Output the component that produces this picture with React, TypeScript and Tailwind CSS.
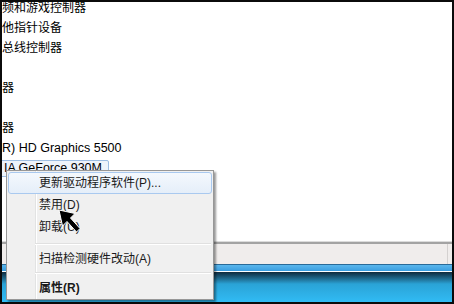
import React from "react";

const cjk = { fontFamily: '"Liberation Sans", "Noto Sans CJK SC", sans-serif' };

function Row({ children }: { children?: React.ReactNode }) {
  return <div className="h-[20px] flex items-center text-[12px] text-black whitespace-nowrap">{children}</div>;
}

function Item({ children, hl, bold }: { children: React.ReactNode; hl?: boolean; bold?: boolean }) {
  return (
    <div
      className={
        "h-[22px] flex items-center pl-[30px] text-[12px] text-[#1a1a1a] rounded-[3px] border " +
        (hl ? "border-[#a9c9ef] bg-gradient-to-b from-[#f4f8fd] to-[#e5eef9]" : "border-transparent") +
        (bold ? " font-bold" : "")
      }
    >
      {children}
    </div>
  );
}

function Sep({ h, top }: { h: string; top: string }) {
  return (
    <div className={h + " flex flex-col pl-[27px] pr-[1px]"}>
      <div className={top} />
      <div className="h-px bg-[#e0e0e0]" />
      <div className="h-px bg-white" />
    </div>
  );
}

export default function App() {
  return (
    <div className="relative w-[454px] h-[304px] bg-[#0b0b0b] p-[2px] overflow-hidden" style={cjk}>
      <div className="w-[450px] h-[300px] flex flex-col">
        <div className="h-[239px] bg-white overflow-hidden">
          <div className="-mt-[4px] flex flex-col">
            <Row>频和游戏控制器</Row>
            <Row>他指针设备</Row>
            <Row>总线控制器</Row>
            <Row />
            <Row>器</Row>
            <Row />
            <Row>器</Row>
            <Row>
              <span className="text-[12.5px]">R) HD Graphics 5500</span>
            </Row>
            <Row>
              <div className="h-[17px] -ml-[3px] pl-[4px] pr-[6px] flex items-center border border-[#9dbde2] bg-[#eef3fa] rounded-[2px] text-[12.5px]">
                IA GeForce 930M
              </div>
            </Row>
          </div>
        </div>
        <div className="h-px bg-[#dcdcdc]" />
        <div className="h-[2px] bg-[#a3a3a3]" />
        <div className="h-[20px] bg-[#f0edec] flex justify-end pr-[4px]">
          <div className="w-px h-full bg-[#d4d1d0]" />
        </div>
        <div className="h-px bg-[#2a6a98]" />
        <div className="h-[6px] bg-gradient-to-b from-[#5ab6ec] to-[#3a9ee0]" />
        <div className="h-px bg-white" />
        <div className="flex-1 bg-gradient-to-b from-[#0e2b3e] via-[#2aa3d6] via-40% to-[#31bbf4]" />
      </div>

      {/* context menu */}
      <div className="absolute left-[6px] top-[170px] w-[208px] h-[130px] bg-[#f0f0f0] border border-[#979797] p-px shadow-[2px_2px_2px_rgba(0,0,0,0.4)]">
        <div className="absolute left-[28px] top-0 bottom-0 w-px bg-[#e2e3e3]" />
        <div className="absolute left-[29px] top-0 bottom-0 w-px bg-white" />
        <div className="relative flex flex-col">
          <Item hl>更新驱动程序软件(P)...</Item>
          <Item>禁用(D)</Item>
          <Item>卸载(U)</Item>
          <Sep h="h-[10px]" top="h-[5px]" />
          <Item>扫描检测硬件改动(A)</Item>
          <Sep h="h-[7px]" top="h-[2px]" />
          <Item bold>属性(R)</Item>
        </div>
      </div>

      {/* cursor */}
      <svg className="absolute left-[58px] top-[209px]" width="26" height="26" viewBox="0 0 26 26">
        <path d="M1 1 L4.5 17 L9 12.5 L18.5 23 L22 19.5 L12.5 9 L17 4.5 Z" fill="#000" stroke="#fff" strokeWidth="1" strokeLinejoin="miter" />
      </svg>
    </div>
  );
}
